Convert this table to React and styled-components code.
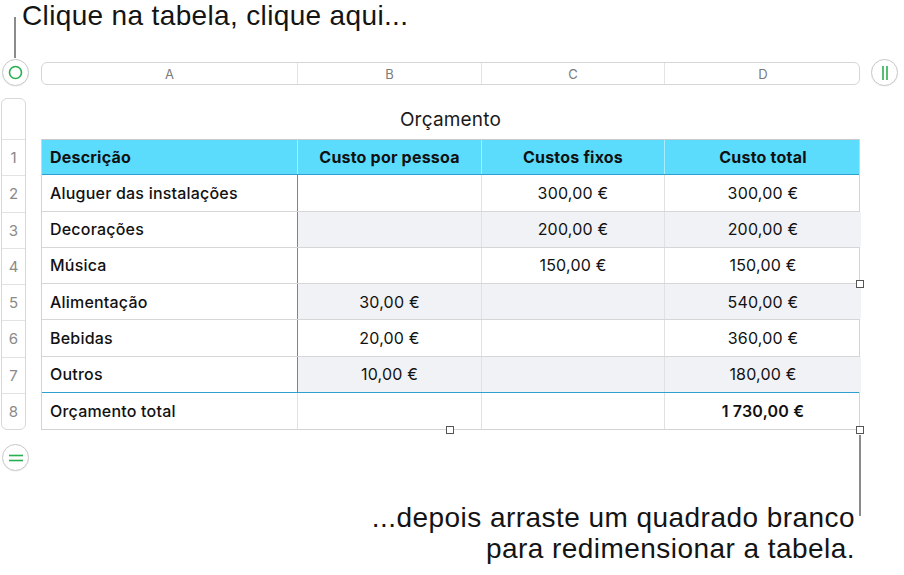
import React from 'react';
import styled, { createGlobalStyle } from 'styled-components';

const Global = createGlobalStyle`
  html, body { margin: 0; padding: 0; background: #fff; }
  body { width: 904px; height: 575px; overflow: hidden; font-family: Inter, "Open Sans", "Liberation Sans", sans-serif; }
`;

const GREEN = '#27b04f';
const COLS = '255px 184px 183px 197px';
const ROW_H = 36.25;

const Page = styled.div`
  position: relative;
  width: 904px;
  height: 575px;
  display: flex;
  flex-direction: column;
`;

const Caption = styled.div`
  font-family: "Liberation Sans", Arial, sans-serif;
  font-size: 28px;
  letter-spacing: 0.35px;
  line-height: ${p => p.$lh || 28}px;
  color: #141414;
  text-align: ${p => p.$align || 'left'};
`;

const TopCaption = styled(Caption)`
  height: 59px;
  box-sizing: border-box;
  padding: 2px 0 0 22px;
`;

const BottomCaption = styled(Caption)`
  padding: 31px 49px 0 0;
  letter-spacing: 0.45px;
`;

const Leader = styled.div`
  position: absolute;
  left: ${p => p.$x}px;
  top: ${p => p.$y}px;
  width: 2px;
  height: ${p => p.$h}px;
  background: #8b8b8b;
`;

const Workspace = styled.div`
  display: flex;
  align-items: flex-start;
`;

const LeftRail = styled.div`
  width: 29px;
  margin-left: 1px;
  display: flex;
  flex-direction: column;
  align-items: flex-start;
`;

const RoundButton = styled.div`
  width: 27px;
  height: 27px;
  box-sizing: border-box;
  border-radius: 50%;
  border: 1px solid #c9c9c9;
  background: #fff;
  box-shadow: 0 0.5px 1px rgba(0,0,0,0.08);
  display: flex;
  align-items: center;
  justify-content: center;
  margin-left: ${p => p.$ml || 0}px;
  margin-top: ${p => p.$mt || 0}px;
`;

const RowHeader = styled.div`
  margin-top: 12px;
  width: 25px;
  box-sizing: border-box;
  border: 1px solid #d8d8d8;
  border-radius: 6px;
  display: flex;
  flex-direction: column;
  background: #fff;
`;

const RowHeaderTop = styled.div`
  height: 40px;
`;

const RowNum = styled.div`
  height: ${ROW_H}px;
  box-sizing: border-box;
  border-top: 1px solid #e2e2e2;
  display: flex;
  align-items: center;
  justify-content: center;
  font-size: 15px;
  color: #8a8a8a;
`;

const Middle = styled.div`
  width: 819px;
  margin-left: 11px;
  display: flex;
  flex-direction: column;
`;

const ColumnBar = styled.div`
  margin-top: 3px;
  height: 23px;
  box-sizing: border-box;
  border: 1px solid #d6d6d6;
  border-radius: 6px;
  display: grid;
  grid-template-columns: ${COLS};
  background: #fff;
`;

const ColLetter = styled.div`
  display: flex;
  align-items: center;
  justify-content: center;
  font-size: 13px;
  color: #7a7a7a;
  border-left: ${p => (p.$first ? 'none' : '1px solid #e3e3e3')};
`;

const Title = styled.div`
  margin-top: 24px;
  height: 22px;
  margin-bottom: 8px;
  text-align: center;
  font-size: 19px;
  letter-spacing: 0.2px;
  line-height: 22px;
  color: #1a1a1a;
`;

const TableWrap = styled.div`
  position: relative;
`;

const Table = styled.div`
  border-left: 1px solid #d3d3d3;
  border-right: 1px solid #d3d3d3;
  border-bottom: 1px solid #d3d3d3;
`;

const Row = styled.div`
  display: grid;
  grid-template-columns: ${COLS};
  height: ${ROW_H}px;
  box-sizing: border-box;
  border-bottom: 1px solid ${p => p.$borderColor || '#d6d6d6'};
  ${p => p.$last && 'border-bottom: none;'}
  background: ${p => (p.$header ? '#5cdcfd' : 'transparent')};
  ${p => p.$header && 'border-top: 1px solid #c9c9c9;'}
`;

const Cell = styled.div`
  display: flex;
  align-items: center;
  justify-content: ${p => (p.$left ? 'flex-start' : 'center')};
  padding-left: ${p => (p.$left ? 8 : 0)}px;
  font-size: 16px;
  letter-spacing: 0.2px;
  font-weight: ${p => p.$weight || 400};
  color: #111;
  background: ${p => (p.$shade ? '#f1f2f6' : 'transparent')};
  border-left: 1px solid ${p => p.$lineColor || '#e1e1e1'};
  ${p => p.$first && 'border-left: none;'}
`;

const Handle = styled.div`
  position: absolute;
  width: 8px;
  height: 8px;
  box-sizing: border-box;
  background: #fff;
  border: 1px solid #555;
  left: ${p => p.$x - 4}px;
  top: ${p => p.$y - 4}px;
`;

const RightRail = styled.div`
  margin-left: 11px;
`;

const rows = [
  ['Aluguer das instalações', '', '300,00 €', '300,00 €'],
  ['Decorações', '', '200,00 €', '200,00 €'],
  ['Música', '', '150,00 €', '150,00 €'],
  ['Alimentação', '30,00 €', '', '540,00 €'],
  ['Bebidas', '20,00 €', '', '360,00 €'],
  ['Outros', '10,00 €', '', '180,00 €'],
];

const BLUE = '#2ea0cf';

export default function App() {
  return (
    <Page>
      <Global />
      <TopCaption>Clique na tabela, clique aqui...</TopCaption>
      <Leader $x={14} $y={17} $h={41} />
      <Workspace>
        <LeftRail>
          <RoundButton $ml={1}>
            <svg width="15" height="15" viewBox="0 0 15 15">
              <circle cx="7.5" cy="7.5" r="6" fill="none" stroke={GREEN} strokeWidth="1.6" />
            </svg>
          </RoundButton>
          <RowHeader>
            <RowHeaderTop />
            {[1, 2, 3, 4, 5, 6, 7, 8].map(n => (
              <RowNum key={n}>{n}</RowNum>
            ))}
          </RowHeader>
          <RoundButton $ml={1} $mt={14}>
            <svg width="16" height="10" viewBox="0 0 16 10">
              <line x1="1" y1="2.5" x2="15" y2="2.5" stroke={GREEN} strokeWidth="1.6" />
              <line x1="1" y1="7.5" x2="15" y2="7.5" stroke={GREEN} strokeWidth="1.6" />
            </svg>
          </RoundButton>
        </LeftRail>
        <Middle>
          <ColumnBar>
            {['A', 'B', 'C', 'D'].map((l, i) => (
              <ColLetter key={l} $first={i === 0}>{l}</ColLetter>
            ))}
          </ColumnBar>
          <Title>Orçamento</Title>
          <TableWrap>
            <Table>
              <Row $header $borderColor={BLUE}>
                <Cell $left $first $weight={700}>Descrição</Cell>
                <Cell $weight={700} $lineColor="#a9ecfd">Custo por pessoa</Cell>
                <Cell $weight={700} $lineColor="#a9ecfd">Custos fixos</Cell>
                <Cell $weight={700} $lineColor="#a9ecfd">Custo total</Cell>
              </Row>
              {rows.map((r, i) => (
                <Row key={r[0]} $borderColor={i === rows.length - 1 ? BLUE : '#d6d6d6'}>
                  <Cell $left $first $weight={500}>{r[0]}</Cell>
                  <Cell $shade={i % 2 === 1} $lineColor={BLUE}>{r[1]}</Cell>
                  <Cell $shade={i % 2 === 1}>{r[2]}</Cell>
                  <Cell $shade={i % 2 === 1}>{r[3]}</Cell>
                </Row>
              ))}
              <Row $last>
                <Cell $left $first $weight={500}>Orçamento total</Cell>
                <Cell />
                <Cell />
                <Cell $weight={600}>1 730,00 €</Cell>
              </Row>
            </Table>
            <Handle $x={409} $y={291} />
            <Handle $x={819} $y={291} />
            <Handle $x={819} $y={145} />
          </TableWrap>
        </Middle>
        <RightRail>
          <RoundButton>
            <svg width="10" height="16" viewBox="0 0 10 16">
              <line x1="3" y1="1" x2="3" y2="15" stroke={GREEN} strokeWidth="1.6" />
              <line x1="7" y1="1" x2="7" y2="15" stroke={GREEN} strokeWidth="1.6" />
            </svg>
          </RoundButton>
        </RightRail>
      </Workspace>
      <Leader $x={859} $y={435} $h={81} />
      <BottomCaption $align="right" $lh={31}>
        ...depois arraste um quadrado branco
        <br />
        para redimensionar a tabela.
      </BottomCaption>
    </Page>
  );
}
